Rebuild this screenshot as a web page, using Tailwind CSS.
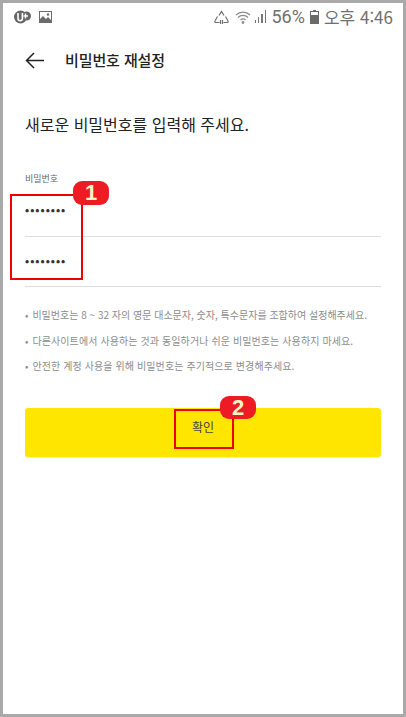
<!DOCTYPE html>
<html lang="ko">
<head>
  <meta charset="UTF-8" />
  <meta name="viewport" content="width=device-width, initial-scale=1.0" />
  <title>비밀번호 재설정</title>
  <script src="https://cdn.jsdelivr.net/npm/@tailwindcss/browser@4"></script>
</head>
<body class="bg-white font-['Noto_Sans_CJK_KR','Noto_Sans',sans-serif]">
  <div class="relative w-[406px] h-[717px] overflow-hidden border-[3px] border-[#a9a9a9] bg-white">
    <!-- status bar -->
    <div class="flex items-center justify-between h-[27px] pl-[11px] pr-[10px] text-[#6f6f6f]">
      <div class="flex items-center gap-[8px]">
        <svg width="17" height="14" viewBox="0 0 17 14"><circle cx="6.500" cy="7" r="6.500" fill="#666"/><circle cx="12.500" cy="6" r="4.500" fill="#666"/><path d="M4 3v5.500a2.200 2.200 0 0 0 4.400 0V3" fill="none" stroke="#fff" stroke-width="1.600"/><path d="M11.500 3.500v5M9.500 6h4.500" fill="none" stroke="#fff" stroke-width="1.400"/></svg>
        <svg width="13" height="12" viewBox="0 0 13 12"><rect x="0.500" y="0.500" width="12" height="11" fill="#fff" stroke="#6b6b6b"/><path d="M1 11V8l3-3 3 3 2-2 3 3v2z" fill="#6b6b6b"/><circle cx="9" cy="3.500" r="1.200" fill="#6b6b6b"/></svg>
      </div>
      <div class="flex items-center gap-[3px]">
        <svg width="15" height="14" viewBox="0 0 15 14" fill="none" stroke="#6f6f6f" stroke-width="1.200"><path d="M5 5.500L7.500 1.500 10 5.500M3.500 6.500L1 11a1 1 0 0 0 1 1.500h3.500M11.500 6.500L14 11a1 1 0 0 1-1 1.500H9.500"/><path d="M6.500 10v4M8.500 10v4"/></svg>
        <svg width="17" height="14" viewBox="0 0 17 14" fill="none" stroke="#8a8a8a" stroke-width="1.200" class="ml-[3px]"><path d="M1 5a10 10 0 0 1 14 0M3 7.500a7 7 0 0 1 10 0M5.500 10a3.500 3.500 0 0 1 5 0"/><circle cx="8" cy="12.500" r="0.800" fill="#8a8a8a"/></svg>
        <div class="flex items-end gap-[2px] h-[13px]">
          <span class="w-[1px] h-[3px] bg-[#777]"></span><span class="w-[1.500px] h-[6px] bg-[#777]"></span><span class="w-[1.500px] h-[9px] bg-[#777]"></span><span class="w-[1.500px] h-[13px] bg-[#777]"></span>
        </div>
        <span class="text-[18px] leading-none ml-[2px] font-['Roboto',sans-serif]">56%</span>
        <svg width="9" height="14" viewBox="0 0 9 14" class="ml-[2px]"><rect x="3" y="0" width="3" height="2" fill="#6b6b6b"/><rect x="0.500" y="1.500" width="8" height="12" fill="#fff" stroke="#6b6b6b"/><rect x="1" y="5" width="7" height="8" fill="#6b6b6b"/></svg>
        <span class="text-[17px] leading-none ml-[2px]">오후 4:46</span>
      </div>
    </div>
    <!-- header -->
    <div class="flex items-center h-[36px] mt-[12px] pl-[22px]">
      <svg width="19" height="17" viewBox="0 0 19 17" fill="none" stroke="#222" stroke-width="1.500"><path d="M19 8.500H1.500M9 1L1.500 8.500 9 16"/></svg>
      <h1 class="ml-[21px] text-[15px] font-medium text-[#222] tracking-[-0.1px]">비밀번호 재설정</h1>
    </div>
    <!-- content -->
    <div class="px-[22px]">
      <p class="mt-[33px] text-[16px] leading-[26px] text-[#222]">새로운 비밀번호를 입력해 주세요.</p>
      <label class="block mt-[35px] text-[9px] leading-[13px] text-[#666]">비밀번호</label>
      <div class="h-[52px] pb-[2px] border-b border-[#dedede] flex items-center text-[#333] text-[11px] font-bold tracking-[1px]">••••••••</div>
      <div class="h-[50px] pb-[2px] border-b border-[#dedede] flex items-center text-[#333] text-[11px] font-bold tracking-[1px]">••••••••</div>
      <ul class="mt-[20px] space-y-[10.500px] text-[10px] leading-[15px] text-[#8c8c8c]">
        <li class="flex gap-[4px] whitespace-nowrap"><span>•</span><span>비밀번호는 8 ~ 32 자의 영문 대소문자, 숫자, 특수문자를 조합하여 설정해주세요.</span></li>
        <li class="flex gap-[4px] whitespace-nowrap"><span>•</span><span class="tracking-[0.1px]">다른사이트에서 사용하는 것과 동일하거나 쉬운 비밀번호는 사용하지 마세요.</span></li>
        <li class="flex gap-[4px] whitespace-nowrap"><span>•</span><span class="tracking-[0.1px]">안전한 계정 사용을 위해 비밀번호는 주기적으로 변경해주세요.</span></li>
      </ul>
      <button class="mt-[35px] w-full h-[49px] pb-[11px] bg-[#ffe600] rounded-[3px] text-[12px] text-[#444] shadow-[0_1px_1px_rgba(0,0,0,0.08)]">확인</button>
    </div>
    <!-- annotations -->
    <div class="absolute left-[7px] top-[191px] w-[73px] h-[86px] border-2 border-[#f00000]"></div>
    <div class="absolute left-[70px] top-[178px] w-[36px] h-[24px] rounded-[9px] bg-[#ed1c24] text-[#fdf5c8] text-[22px] font-bold leading-[24px] text-center font-['Liberation_Sans',sans-serif]">1</div>
    <div class="absolute left-[171px] top-[406px] w-[60px] h-[40px] border-2 border-[#f00000]"></div>
    <div class="absolute left-[217px] top-[393px] w-[36px] h-[23px] rounded-[9px] bg-[#ed1c24] text-[#fdf5c8] text-[22px] font-bold leading-[23px] text-center font-['Liberation_Sans',sans-serif]">2</div>
  </div>
</body>
</html>
